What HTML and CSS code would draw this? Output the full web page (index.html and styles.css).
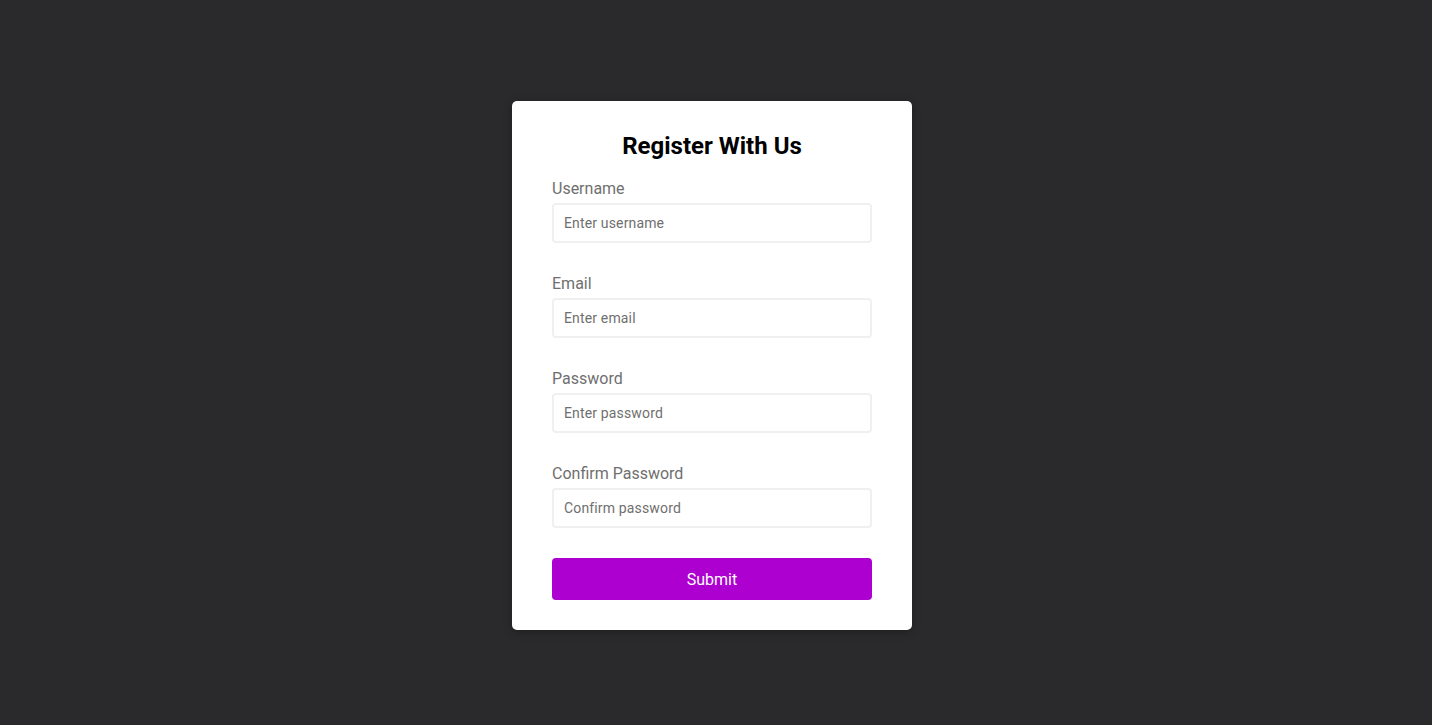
FILE: index.html
```html
<!DOCTYPE html>
<html lang="en">
<head>
<meta charset="UTF-8">
<title>Register With Us</title>
<link rel="stylesheet" href="styles.css">
</head>
<body>
<div class="container">
  <form class="form">
    <h2 class="title">Register With Us</h2>
    <div class="form-control">
      <label for="username">Username</label>
      <input type="text" id="username" placeholder="Enter username">
    </div>
    <div class="form-control">
      <label for="email">Email</label>
      <input type="text" id="email" placeholder="Enter email">
    </div>
    <div class="form-control">
      <label for="password">Password</label>
      <input type="password" id="password" placeholder="Enter password">
    </div>
    <div class="form-control">
      <label for="password2">Confirm Password</label>
      <input type="password" id="password2" placeholder="Confirm password">
    </div>
    <button type="button" class="submit">Submit</button>
  </form>
</div>
</body>
</html>
```
FILE: styles.css
```css
* { box-sizing: border-box; }
body {
  margin: 0;
  background: #2a2a2c;
  font-family: Roboto, "Liberation Sans", sans-serif;
  display: flex;
  align-items: flex-start;
  justify-content: center;
  min-height: 100vh;
  padding: 101px 8px 0 0;
}
.container {
  background: #fff;
  border-radius: 5px;
  box-shadow: 0 2px 10px rgba(0,0,0,0.3);
  width: 400px;
}
.form { padding: 30px 40px; }
.title {
  text-align: center;
  margin: 1px 0 18px;
  font-size: 24px;
  line-height: 28px;
  font-weight: 700;
  color: #000;
}
.form-control {
  margin-bottom: 10px;
  padding-bottom: 20px;
}
.form-control label {
  color: #6f6f6f;
  display: block;
  padding-top: 1px;
  margin-bottom: 4px;
  font-size: 16px;
  line-height: 20px;
}
.form-control input {
  border: 2px solid #f0f0f0;
  border-radius: 4px;
  display: block;
  width: 100%;
  padding: 10px;
  font-size: 14px;
  line-height: 16px;
  height: 40px;
  font-family: Roboto, "Liberation Sans", sans-serif;
  letter-spacing: 0.15px;
  outline: none;
}
.form-control input::placeholder { color: #6f6f6f; }
.submit {
  cursor: pointer;
  background: #ad00d0;
  border: 2px solid #ad00d0;
  border-radius: 4px;
  color: #fff;
  display: block;
  font-size: 16px;
  line-height: 19px;
  padding: 10px;
  margin-top: 3px;
  width: 100%;
  height: 42px;
  font-family: Roboto, "Liberation Sans", sans-serif;
}
```
